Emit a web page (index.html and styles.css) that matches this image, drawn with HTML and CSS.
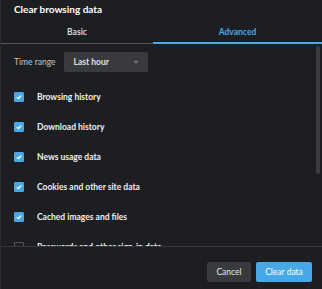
FILE: index.html
```html
<!DOCTYPE html>
<html lang="en">
<head>
  <meta charset="UTF-8" />
  <title>Clear browsing data</title>
  <link rel="stylesheet" href="styles.css">
</head>
<body>

<div class="dialog">
  <div class="title">Clear browsing data</div>

  <div class="tabs">
    <div class="tab tab-basic">Basic</div>
    <div class="tab active">Advanced</div>
  </div>

  <div class="content">
    <div class="range-row">
      <span class="range-label">Time range</span>
      <div class="select">
        <span>Last hour</span>
        <span class="arrow"></span>
      </div>
    </div>

    <div class="option"><span class="box checked"><svg viewBox="0 0 10 10"><path d="M2.3 5.2 L4.2 7 L7.8 3.2" /></svg></span>Browsing history</div>
    <div class="option"><span class="box checked"><svg viewBox="0 0 10 10"><path d="M2.3 5.2 L4.2 7 L7.8 3.2" /></svg></span>Download history</div>
    <div class="option"><span class="box checked"><svg viewBox="0 0 10 10"><path d="M2.3 5.2 L4.2 7 L7.8 3.2" /></svg></span>News usage data</div>
    <div class="option"><span class="box checked"><svg viewBox="0 0 10 10"><path d="M2.3 5.2 L4.2 7 L7.8 3.2" /></svg></span>Cookies and other site data</div>
    <div class="option"><span class="box checked"><svg viewBox="0 0 10 10"><path d="M2.3 5.2 L4.2 7 L7.8 3.2" /></svg></span>Cached images and files</div>
    <div class="option"><span class="box"></span>Passwords and other sign-in data</div>

    <div class="thumb"></div>
  </div>

  <div class="footer">
    <button class="btn btn-cancel">Cancel</button>
    <button class="btn btn-primary">Clear data</button>
  </div>
</div>

</body>
</html>
```

FILE: styles.css
```css
* { box-sizing: border-box; }

body {
  margin: 0;
  background: #1d1e21;
  font-family: Lato, "Open Sans", sans-serif;
  color: #e8e8e8;
}

.dialog {
  width: 322px;
  height: 289px;
  display: flex;
  flex-direction: column;
  background: #1d1e21;
  border-left: 1px solid #2a2b2e;
}

.title {
  height: 22px;
  padding: 1px 0 0 13px;
  font-size: 10px;
  font-weight: 700;
  line-height: 17px;
  color: #ffffff;
}

.tabs {
  display: flex;
  height: 22px;
  border-bottom: 1px solid #55565a;
}

.tab {
  flex: 1;
  text-align: center;
  font-size: 8.5px;
  font-weight: 700;
  line-height: 20px;
  color: #d8d8d8;
}

.tab-basic {
  flex: 0 0 152px;
}

.tab.active {
  color: #4aaae8;
  border-bottom: 2px solid #4aaae8;
  margin-bottom: -1px;
}

.content {
  flex: 1;
  position: relative;
  overflow: hidden;
  padding: 8px 14px 0 13px;
}

.range-row {
  display: flex;
  align-items: center;
  gap: 8px;
  height: 20px;
  margin-bottom: 10px;
}

.range-label {
  font-size: 8.5px;
  color: #c4c4c4;
}

.select {
  width: 84px;
  height: 20px;
  background: #393a3d;
  border-radius: 2px;
  display: flex;
  align-items: center;
  justify-content: space-between;
  padding: 0 9px 0 10px;
  font-size: 8.5px;
  font-weight: 700;
  color: #e0e0e0;
}

.arrow {
  width: 0;
  height: 0;
  border-left: 3.5px solid transparent;
  border-right: 3.5px solid transparent;
  border-top: 3px solid #6f7074;
}

.option {
  display: flex;
  align-items: center;
  gap: 13px;
  height: 30px;
  font-size: 8.5px;
  font-weight: 700;
  color: #f0f0f0;
}

.box {
  width: 10px;
  height: 10px;
  border-radius: 1px;
  border: 1px solid #55565a;
  flex: none;
}

.box.checked {
  background: #46a8e6;
  border-color: #46a8e6;
}

.box svg {
  display: block;
  width: 8px;
  height: 8px;
  fill: none;
  stroke: #ffffff;
  stroke-width: 1.6;
}

.thumb {
  position: absolute;
  right: 2px;
  top: 2px;
  width: 4px;
  height: 128px;
  border-radius: 2px;
  background: #3a3b3e;
}

.footer {
  height: 43px;
  border-top: 1px solid #37383b;
  display: flex;
  justify-content: flex-end;
  gap: 5px;
  padding: 15px 10px 0 0;
}

.btn {
  height: 20px;
  border: none;
  border-radius: 2px;
  font-family: inherit;
  font-size: 8.5px;
  padding: 0;
  color: #e8e8e8;
}

.btn-cancel {
  width: 44px;
  background: #393a3d;
}

.btn-primary {
  width: 56px;
  background: #46a8e6;
  color: #ffffff;
}
```
